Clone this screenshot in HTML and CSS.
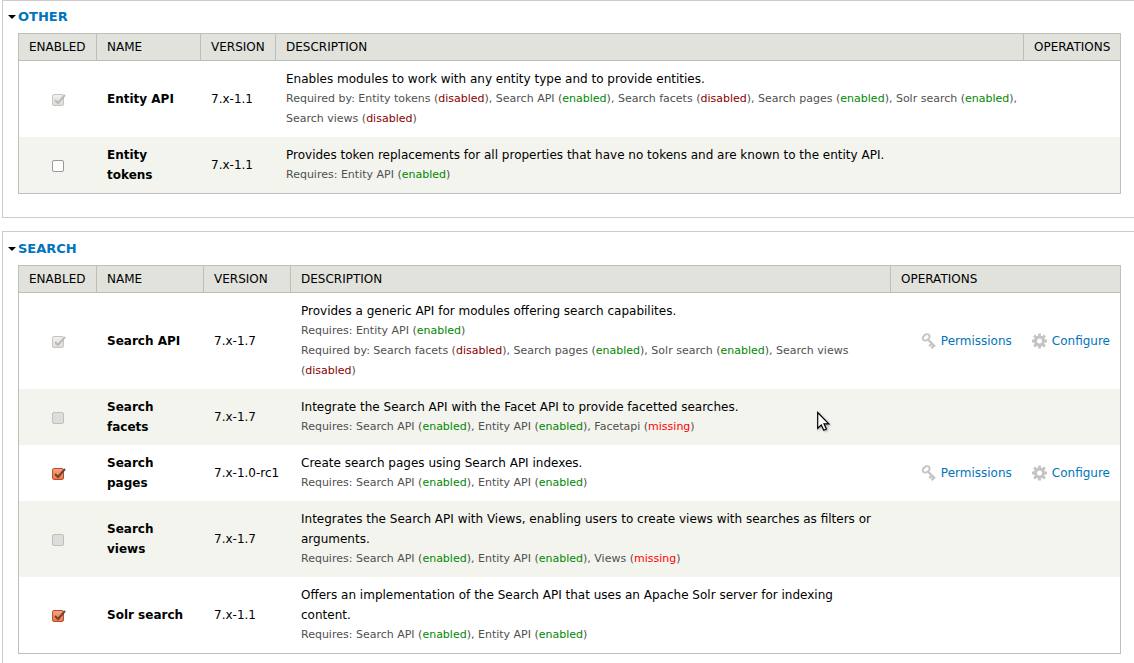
FILE: index.html
```
<!DOCTYPE html>
<html lang="en">
<head>
<meta charset="utf-8">
<title>Modules</title>
<link rel="stylesheet" href="styles.css">
</head>
<body>
<svg class="sprite" aria-hidden="true">
  <symbol id="tick" viewBox="0 0 14 14"><path d="M3 7 L6 10 L13 2" fill="none" stroke="currentColor" stroke-width="2"/></symbol>
  <symbol id="key" viewBox="0 0 15 16">
    <g fill="none" stroke="#c4c4c4">
      <ellipse cx="5.2" cy="4.4" rx="3.8" ry="2.8" stroke-width="1.9" transform="rotate(-38 5.2 4.4)"/>
      <path d="M7.4 7 L14 13.5" stroke-width="2.4"/>
      <path d="M10.4 11.2 L8.2 13.2 M12.6 13 L10.6 15.2" stroke-width="2.4"/>
    </g>
  </symbol>
  <symbol id="gear" viewBox="0 0 15 15">
    <g fill="none" stroke="#c4c4c4">
      <circle cx="7.5" cy="7.5" r="4" stroke-width="3"/>
      <path d="M7.5 0V3M7.5 12V15M0 7.5H3M12 7.5H15M2.1 2.1L4.3 4.3M10.7 10.7L12.9 12.9M2.1 12.9L4.3 10.7M10.7 4.3L12.9 2.1" stroke-width="2.8"/>
    </g>
  </symbol>
</svg>
<main>
  <section class="group">
    <h2 class="group-title"><a href="#other">Other</a></h2>
    <table class="modules" id="other">
      <colgroup><col class="c-enabled"><col class="c-name"><col class="c-version"><col><col class="c-ops"></colgroup>
      <thead><tr><th>Enabled</th><th>Name</th><th>Version</th><th>Description</th><th>Operations</th></tr></thead>
      <tbody>
        <tr>
          <td class="check"><span class="box"><input type="checkbox" id="entity" checked disabled><svg class="tick"><use href="#tick"/></svg></span></td>
          <td class="name"><label for="entity">Entity API</label></td>
          <td>7.x-1.1</td>
          <td class="desc">Enables modules to work with any entity type and to provide entities.
            <div class="req">Required by: Entity tokens (<span class="off">disabled</span>), Search API (<span class="on">enabled</span>), Search facets (<span class="off">disabled</span>), Search pages (<span class="on">enabled</span>), Solr search (<span class="on">enabled</span>), Search views (<span class="off">disabled</span>)</div></td>
          <td></td>
        </tr>
        <tr>
          <td class="check"><span class="box"><input type="checkbox" id="tokens"></span></td>
          <td class="name"><label for="tokens">Entity tokens</label></td>
          <td>7.x-1.1</td>
          <td class="desc">Provides token replacements for all properties that have no tokens and are known to the entity API.
            <div class="req">Requires: Entity API (<span class="on">enabled</span>)</div></td>
          <td></td>
        </tr>
      </tbody>
    </table>
  </section>

  <section class="group">
    <h2 class="group-title"><a href="#search">Search</a></h2>
    <table class="modules wide-ops" id="search">
      <colgroup><col class="c-enabled"><col class="c-name"><col class="c-version"><col><col class="c-ops"></colgroup>
      <thead><tr><th>Enabled</th><th>Name</th><th>Version</th><th>Description</th><th>Operations</th></tr></thead>
      <tbody>
        <tr>
          <td class="check"><span class="box"><input type="checkbox" id="api" checked disabled><svg class="tick"><use href="#tick"/></svg></span></td>
          <td class="name"><label for="api">Search API</label></td>
          <td>7.x-1.7</td>
          <td class="desc">Provides a generic API for modules offering search capabilites.
            <div class="req">Requires: Entity API (<span class="on">enabled</span>)</div>
            <div class="req">Required by: Search facets (<span class="off">disabled</span>), Search pages (<span class="on">enabled</span>), Solr search (<span class="on">enabled</span>), Search views (<span class="off">disabled</span>)</div></td>
          <td><div class="ops"><a href="#permissions"><svg class="key"><use href="#key"/></svg>Permissions</a><a href="#configure"><svg class="gear"><use href="#gear"/></svg>Configure</a></div></td>
        </tr>
        <tr>
          <td class="check"><span class="box"><input type="checkbox" id="facets" disabled></span></td>
          <td class="name"><label for="facets">Search facets</label></td>
          <td>7.x-1.7</td>
          <td class="desc pointed">Integrate the Search API with the Facet API to provide facetted searches.
            <div class="req">Requires: Search API (<span class="on">enabled</span>), Entity API (<span class="on">enabled</span>), Facetapi (<span class="missing">missing</span>)</div>
            <svg class="cursor" viewBox="0 0 14 21" aria-hidden="true"><path d="M.7 1.5V17.3L4.3 13.9L6.8 19.2L9.4 18L7 12.8H11.8Z" fill="#fff" stroke="#000" stroke-width="1.2"/></svg></td>
          <td></td>
        </tr>
        <tr>
          <td class="check"><span class="box"><input type="checkbox" id="pages" checked><svg class="tick"><use href="#tick"/></svg></span></td>
          <td class="name"><label for="pages">Search pages</label></td>
          <td>7.x-1.0-rc1</td>
          <td class="desc">Create search pages using Search API indexes.
            <div class="req">Requires: Search API (<span class="on">enabled</span>), Entity API (<span class="on">enabled</span>)</div></td>
          <td><div class="ops"><a href="#permissions"><svg class="key"><use href="#key"/></svg>Permissions</a><a href="#configure"><svg class="gear"><use href="#gear"/></svg>Configure</a></div></td>
        </tr>
        <tr>
          <td class="check"><span class="box"><input type="checkbox" id="views" disabled></span></td>
          <td class="name"><label for="views">Search views</label></td>
          <td>7.x-1.7</td>
          <td class="desc">Integrates the Search API with Views, enabling users to create views with searches as filters or arguments.
            <div class="req">Requires: Search API (<span class="on">enabled</span>), Entity API (<span class="on">enabled</span>), Views (<span class="missing">missing</span>)</div></td>
          <td></td>
        </tr>
        <tr>
          <td class="check"><span class="box"><input type="checkbox" id="solr" checked><svg class="tick"><use href="#tick"/></svg></span></td>
          <td class="name"><label for="solr">Solr search</label></td>
          <td>7.x-1.1</td>
          <td class="desc">Offers an implementation of the Search API that uses an Apache Solr server for indexing content.
            <div class="req">Requires: Search API (<span class="on">enabled</span>), Entity API (<span class="on">enabled</span>)</div></td>
          <td></td>
        </tr>
      </tbody>
    </table>
  </section>
</main>
</body>
</html>
```
FILE: styles.css
```
* { box-sizing: border-box; }
body {
  margin: 0;
  background: #fff;
  color: #000;
  font: 12px/20px "DejaVu Sans", Verdana, sans-serif;
}
main {
  display: flex;
  flex-direction: column;
  gap: 13px;
  padding-left: 2px;
}
.sprite { display: none; }
a { color: #0074bd; text-decoration: none; }

.group {
  padding: 6px 13px 23px 15px;
  border: 1px solid #ccc;
  border-right: 0;
}
.group:last-child {
  padding-top: 7px;
  padding-bottom: 9px;
  border-bottom: 0;
}
.group-title {
  display: flex;
  align-items: center;
  gap: 2px;
  margin: 0 0 6px -10px;
  font-size: 13px;
  line-height: 20px;
  text-transform: uppercase;
}
.group-title::before {
  content: "";
  border: 4px solid transparent;
  border-top-color: #000;
  border-bottom: 0;
}

.modules {
  width: 100%;
  table-layout: fixed;
  border-collapse: separate;
  border-spacing: 0;
  border: 1px solid #bebfb9;
}
.c-enabled { width: 78px; }
.c-name { width: 104px; }
.c-version { width: 75px; }
.c-ops { width: 96px; }
.wide-ops .c-name { width: 107px; }
.wide-ops .c-version { width: 87px; }
.wide-ops .c-ops { width: 229px; }

th {
  padding: 3px 10px;
  border-right: 1px solid #bebfb9;
  border-bottom: 1px solid #bebfb9;
  background: #e1e2dc;
  font-weight: normal;
  text-align: left;
  text-transform: uppercase;
  white-space: nowrap;
}
th:last-child { border-right: 0; }
td { padding: 8px 10px; vertical-align: middle; }
tbody tr:nth-child(even) { background: #f3f4ee; }
.name { font-weight: bold; }
.desc { padding-right: 2px; }
.wide-ops .desc { padding-right: 10px; }
.req { color: #505050; font-size: 11px; }
.on { color: #080; }
.off { color: #800; }
.missing { color: #f00; }

.check { text-align: center; }
.box {
  display: inline-block;
  position: relative;
  width: 12px;
  height: 12px;
  vertical-align: middle;
}
.box input {
  appearance: none;
  display: block;
  width: 12px;
  height: 12px;
  margin: 0;
  border: 1px solid #9b9792;
  border-radius: 2px;
  background: #fff;
}
.box input:disabled { border-color: #c2beba; background: #dedddd; }
.box input:checked { border-color: #b9502c; background: linear-gradient(#f9a183, #f07746); }
.box input:checked:disabled { border-color: #c8c4c0; background: linear-gradient(#f0f0ef, #dfdedd); }
.tick {
  position: absolute;
  top: -1px;
  left: 0;
  width: 14px;
  height: 14px;
  color: #6b4436;
  pointer-events: none;
}
:disabled + .tick { color: #bdbab7; }

.ops { display: flex; justify-content: flex-end; gap: 20px; }
.ops a { display: flex; align-items: center; gap: 5px; }
.key, .gear { width: 15px; height: 16px; }

.pointed { position: relative; }
.cursor {
  position: absolute;
  top: 22px;
  left: 526px;
  width: 14px;
  height: 21px;
  filter: drop-shadow(1px 1px 1px #0005);
}
```
